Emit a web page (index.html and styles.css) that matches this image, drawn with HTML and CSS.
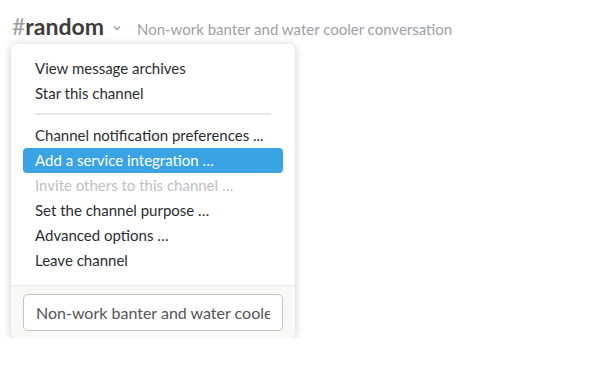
FILE: index.html
```html
<!DOCTYPE html>
<html>
<head>
<meta charset="utf-8">
<link rel="stylesheet" href="styles.css">
</head>
<body>
<div class="header">
  <span class="channel"><span class="hash">#</span>random</span>
  <svg class="chev" width="8" height="6" viewBox="0 0 8 6"><path d="M1 1.5 L4 4.5 L7 1.5" fill="none" stroke="#9e9ea6" stroke-width="1.4"/></svg>
  <span class="purpose">Non-work banter and water cooler conversation</span>
</div>
<div class="menu">
  <ul class="items">
    <li class="item">View message archives</li>
    <li class="item">Star this channel</li>
    <li class="divider"></li>
    <li class="item">Channel notification preferences ...</li>
    <li class="item active">Add a service integration …</li>
    <li class="item disabled">Invite others to this channel …</li>
    <li class="item">Set the channel purpose …</li>
    <li class="item">Advanced options …</li>
    <li class="item">Leave channel</li>
  </ul>
  <div class="footer">
    <div class="input"><span class="input-text">Non-work banter and water cooler conversation</span></div>
  </div>
</div>
</body>
</html>
```
FILE: styles.css
```css
html, body { margin: 0; padding: 0; background: #fff; }
body { font-family: Lato, "Open Sans", sans-serif; }
.header {
  display: flex;
  align-items: baseline;
  padding: 13px 0 0 12px;
  height: 39px;
  box-sizing: border-box;
}
.channel { font-size: 23px; font-weight: 700; color: #3d3c40; line-height: 26px; }
.hash { font-weight: 400; color: #9e9ea6; }
.chev { margin: 0 16px 0 9px; position: relative; top: -4px; }
.purpose { font-size: 15px; color: #9e9ea6; }
.menu {
  margin: 5px 0 0 11px;
  width: 284px;
  background: #fff;
  border-radius: 6px;
  box-shadow: 0 1px 8px rgba(0,0,0,0.22);
  overflow: hidden;
}
.items { list-style: none; margin: 0; padding: 11.5px 12px 12px; }
.item {
  font-size: 15px;
  line-height: 25px;
  padding-left: 12px;
  color: #2c2d30;
  border-radius: 4px;
  white-space: nowrap;
}
.item.active { background: #3aa3e3; color: #fff; }
.item.disabled { color: #c0bfc2; }
.divider { height: 2px; background: #e8e8e8; margin: 7.5px 12px 7.5px 12px; }
.footer {
  border-top: 1px solid #ebeae8;
  background: #f9f8f6;
  padding: 8px 12px 7px;
}
.input {
  height: 37px;
  box-sizing: border-box;
  border: 1px solid #c5c5c5;
  border-radius: 5px;
  background: #fff;
  padding: 0 12px;
  display: flex;
  align-items: center;
}
.input-text {
  display: block;
  font-size: 16px;
  line-height: 35px;
  color: #555459;
  white-space: nowrap;
  overflow: hidden;
  flex: 1;
  min-width: 0;
}
```
